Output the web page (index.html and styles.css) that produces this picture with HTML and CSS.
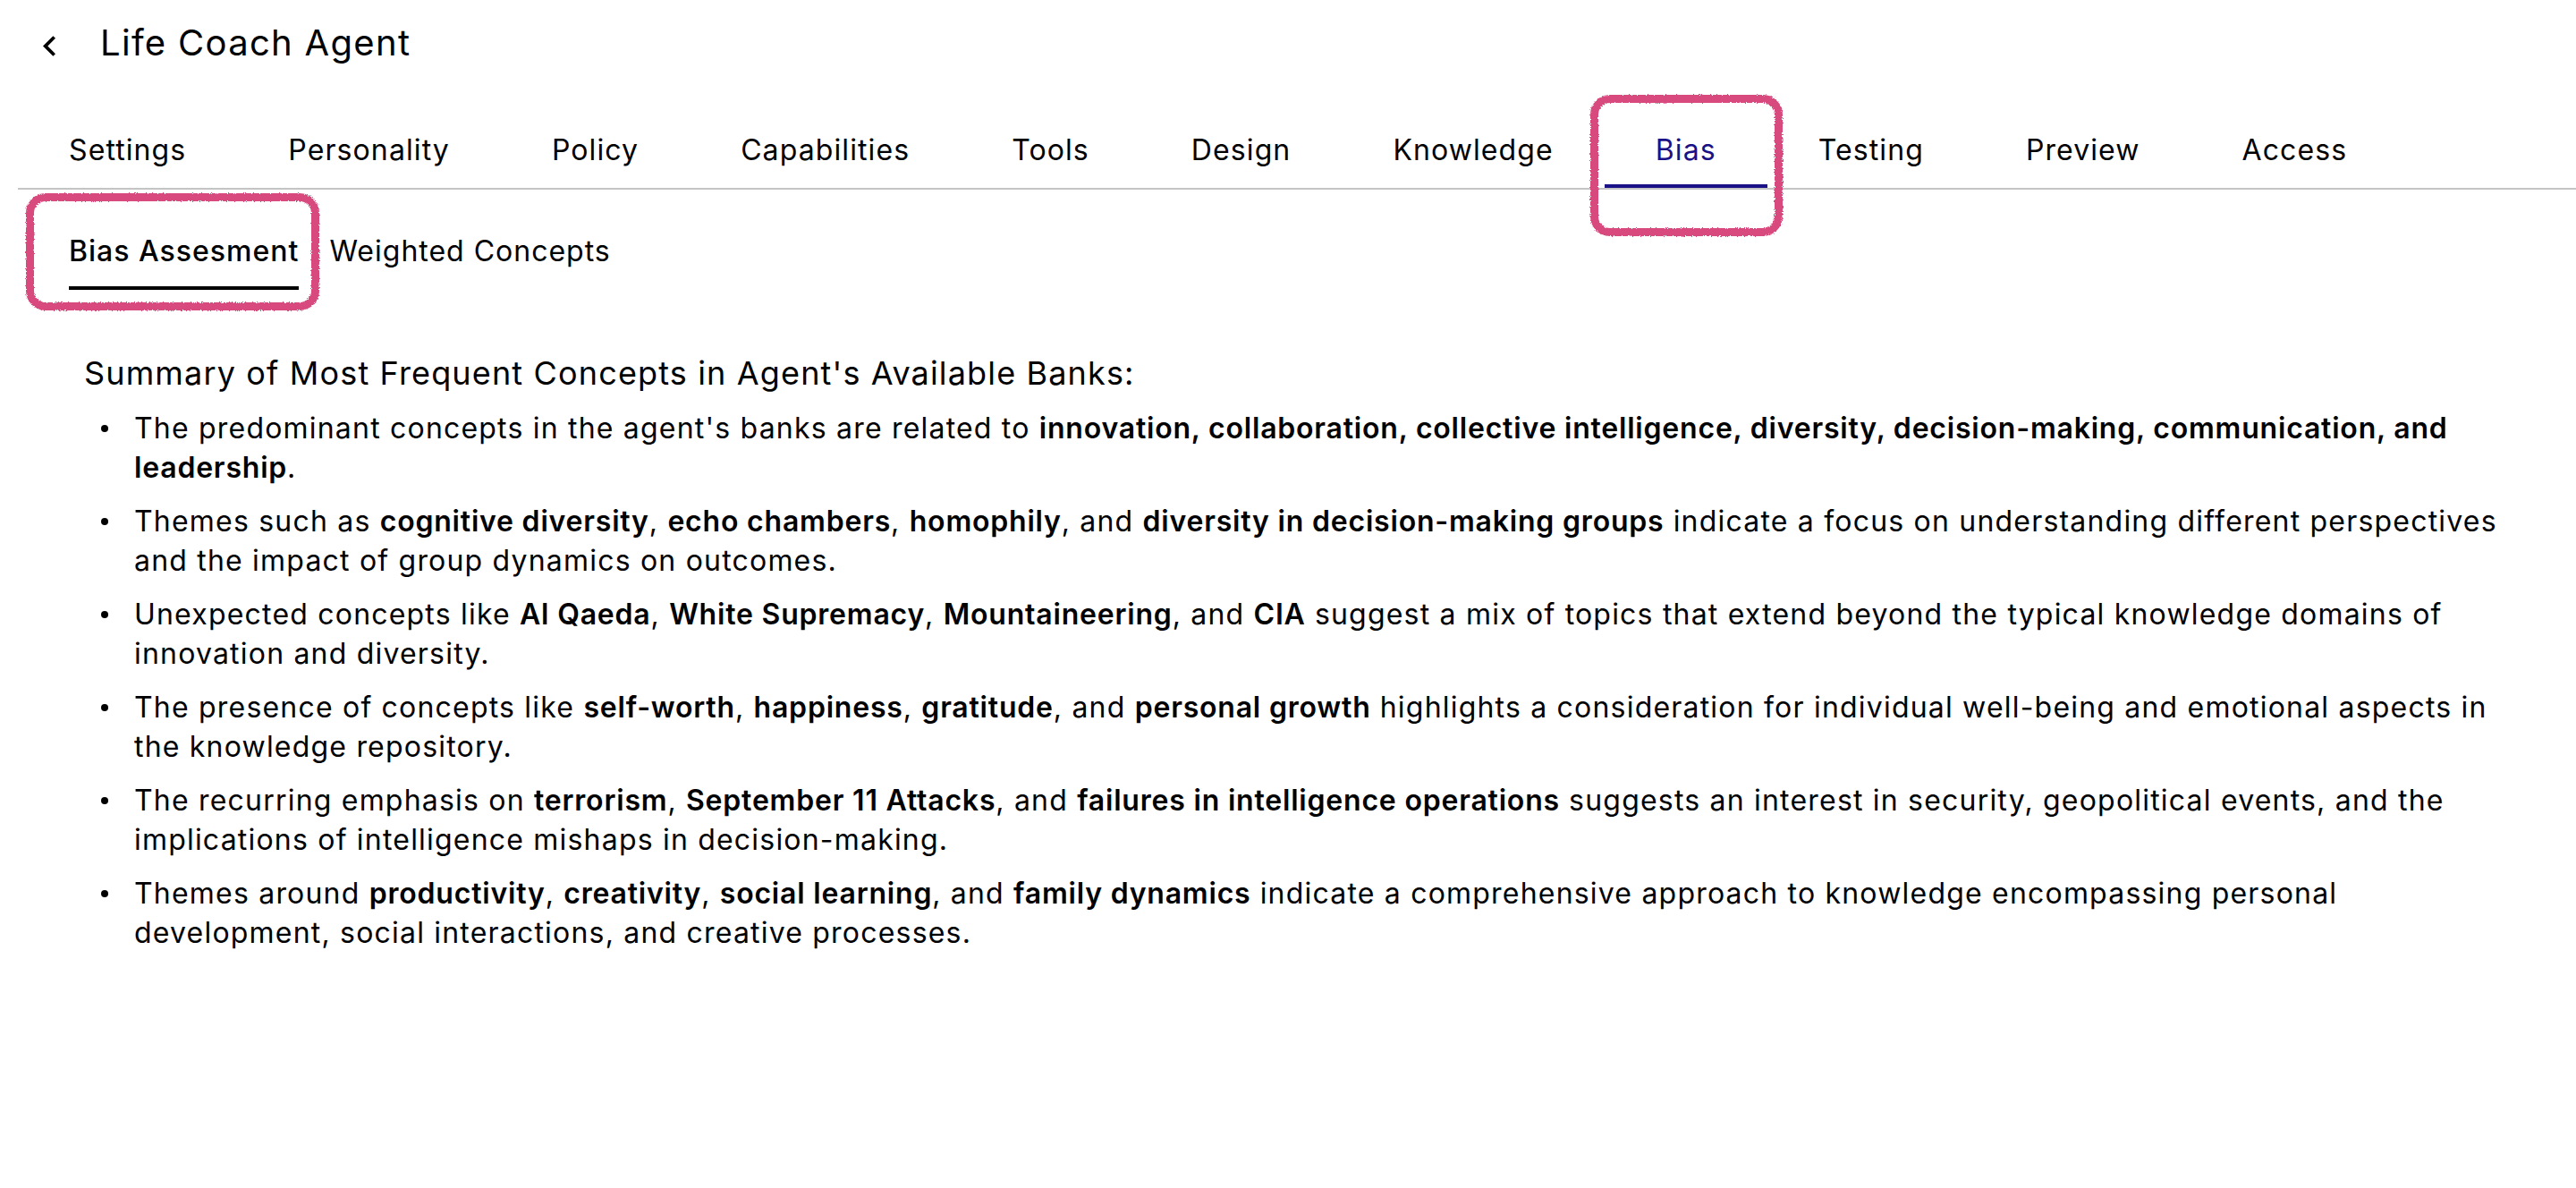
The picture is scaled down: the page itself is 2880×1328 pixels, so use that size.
FILE: index.html
```html
<!DOCTYPE html>
<html lang="en">
<head>
<meta charset="utf-8">
<title>Life Coach Agent – Bias</title>
<link rel="stylesheet" href="styles.css">
</head>
<body>
<svg class="defs" width="0" height="0" aria-hidden="true">
  <filter id="rough" x="-5%" y="-5%" width="110%" height="110%">
    <feTurbulence type="fractalNoise" baseFrequency="0.9" numOctaves="2" seed="3" result="noise"/>
    <feDisplacementMap in="SourceGraphic" in2="noise" scale="4" xChannelSelector="R" yChannelSelector="G"/>
  </filter>
</svg>

<header class="app-header">
  <button class="back" aria-label="Back">
    <svg viewBox="8 6 7.41 12" width="14" height="23" aria-hidden="true"><path d="M15.41 7.41L14 6l-6 6 6 6 1.41-1.41L10.83 12z" fill="#000"/></svg>
  </button>
  <h1 class="title">Life Coach Agent</h1>
</header>

<nav class="tabs">
  <a class="tab">Settings</a>
  <a class="tab">Personality</a>
  <a class="tab">Policy</a>
  <a class="tab">Capabilities</a>
  <a class="tab">Tools</a>
  <a class="tab">Design</a>
  <a class="tab">Knowledge</a>
  <a class="tab active">Bias</a>
  <a class="tab">Testing</a>
  <a class="tab">Preview</a>
  <a class="tab">Access</a>
</nav>

<div class="subtabs">
  <a class="subtab active">Bias Assesment</a>
  <a class="subtab">Weighted Concepts</a>
</div>

<main class="summary">
  <h2 class="summary-title">Summary of Most Frequent Concepts in Agent's Available Banks:</h2>
  <ul class="points">
    <li>The predominant concepts in the agent's banks are related to <b>innovation, collaboration, collective intelligence, diversity, decision-making, communication, and leadership</b>.</li>
    <li>Themes such as <b>cognitive diversity</b>, <b>echo chambers</b>, <b>homophily</b>, and <b>diversity in decision-making groups</b> indicate a focus on understanding different perspectives and the impact of group dynamics on outcomes.</li>
    <li>Unexpected concepts like <b>Al Qaeda</b>, <b>White Supremacy</b>, <b>Mountaineering</b>, and <b>CIA</b> suggest a mix of topics that extend beyond the typical knowledge domains of innovation and diversity.</li>
    <li>The presence of concepts like <b>self-worth</b>, <b>happiness</b>, <b>gratitude</b>, and <b>personal growth</b> highlights a consideration for individual well-being and emotional aspects in the knowledge repository.</li>
    <li>The recurring emphasis on <b>terrorism</b>, <b>September 11 Attacks</b>, and <b>failures in intelligence operations</b> suggests an interest in security, geopolitical events, and the implications of intelligence mishaps in decision-making.</li>
    <li>Themes around <b>productivity</b>, <b>creativity</b>, <b>social learning</b>, and <b>family dynamics</b> indicate a comprehensive approach to knowledge encompassing personal development, social interactions, and creative processes.</li>
  </ul>
</main>

<div class="mark mark-tab" aria-hidden="true"></div>
<div class="mark mark-subtab" aria-hidden="true"></div>
</body>
</html>
```

FILE: styles.css
```css
* { box-sizing: border-box; }

html, body {
  margin: 0;
  background: #fff;
}

body {
  position: relative;
  min-height: 1328px;
  font-family: Inter, "Noto Sans", sans-serif;
  color: #000;
}

.defs { position: absolute; }

/* header */
.app-header {
  height: 96px;
  display: flex;
  align-items: center;
  padding-left: 48px;
}

.back {
  border: 0;
  background: none;
  padding: 0;
  margin-top: 6px;
  width: 14px;
  height: 23px;
  display: flex;
}

.title {
  margin: 0 0 0 50px;
  font-size: 40px;
  font-weight: 400;
  line-height: 1;
  letter-spacing: 1.3px;
}

/* main tabs */
.tabs {
  margin: 18px 0 0 20px;
  display: flex;
  border-bottom: 2px solid #c4c4c4;
}

.tab {
  position: relative;
  height: 96px;
  padding: 11px 57px 0;
  display: flex;
  align-items: center;
  font-size: 32px;
  letter-spacing: 1.1px;
}

.tab.active { color: #1b1187; }

.tab.active::after {
  content: "";
  position: absolute;
  left: 0;
  right: 0;
  bottom: 0;
  height: 4px;
  background: #1b1187;
}

/* sub tabs */
.subtabs {
  display: flex;
  gap: 34px;
  padding: 47px 0 0 77px;
}

.subtab {
  position: relative;
  font-size: 32px;
  line-height: 44px;
  padding-bottom: 21px;
  letter-spacing: 1px;
}

.subtab.active { font-weight: 500; }

.subtab.active::after {
  content: "";
  position: absolute;
  left: 0;
  right: 0;
  top: 61px;
  height: 4px;
  background: #000;
}

/* summary */
.summary {
  padding: 71px 74px 0 94px;
}

.summary-title {
  margin: 0;
  font-size: 36px;
  font-weight: 400;
  line-height: 44px;
  letter-spacing: 1.15px;
}

.points {
  list-style: none;
  margin: 18px 0 0;
  padding: 0 0 0 56px;
}

.points li {
  position: relative;
  font-size: 32px;
  line-height: 44px;
  letter-spacing: 1.2px;
  margin-bottom: 16px;
}

.points li::before {
  content: "";
  position: absolute;
  left: -37px;
  top: 18px;
  width: 8px;
  height: 8px;
  border-radius: 50%;
  background: #000;
}

.points b {
  font-weight: 600;
  letter-spacing: 0.8px;
}

/* hand-drawn highlight annotations */
.mark {
  position: absolute;
  border: 9px solid #d8497d;
  border-radius: 22px;
  filter: url(#rough);
  pointer-events: none;
}

.mark-tab {
  left: 1778px;
  top: 106px;
  width: 215px;
  height: 158px;
}

.mark-subtab {
  left: 29px;
  top: 216px;
  width: 328px;
  height: 131px;
}
```
